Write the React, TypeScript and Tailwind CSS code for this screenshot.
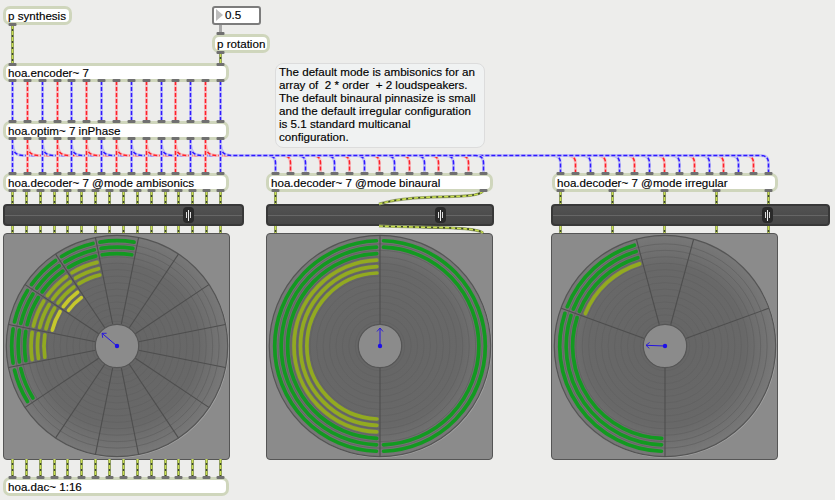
// Max/MSP patcher: hoa.decoder~ help patch

const FONT = "font-['Liberation_Sans',Arial,sans-serif] [-webkit-text-stroke:0.15px_#000]";

const spread = (start: number, end: number, count: number) =>
  Array.from({ length: count }, (_, i) => Math.round(start + ((end - start) * i) / (count - 1)) + 0.5);

const encoderXs = spread(12, 220, 15);
const binauralXs = spread(275, 483, 15);
const irregularXs = spread(560, 768, 15);
const outXs = spread(12, 220, 16);
const irregularOutXs = spread(560, 768, 5);

const GREEN = "#129a20";
const OLIVE = "#92aa20";
const YELLOW = "#c6c82c";

const ringRadius = (i: number) => 105.3 - 6.45 * i;

const polar = (r: number, deg: number) => {
  const a = ((deg - 90) * Math.PI) / 180;
  return [r * Math.cos(a), r * Math.sin(a)];
};

const arc = (r: number, from: number, to: number) => {
  const [x1, y1] = polar(r, from);
  const [x2, y2] = polar(r, to);
  const large = to - from > 180 ? 1 : 0;
  return `M${x1.toFixed(2)} ${y1.toFixed(2)}A${r} ${r} 0 ${large} 1 ${x2.toFixed(2)} ${y2.toFixed(2)}`;
};

interface Sector {
  from: number;
  to: number;
  lit?: string[];
}

const g3 = [GREEN, GREEN, GREEN];
const o3 = [OLIVE, OLIVE, OLIVE];

const ambisonicLit: Record<number, string[]> = {
  0: g3,
  15: [...g3, ...o3],
  14: [...g3, ...o3, YELLOW, YELLOW],
  13: [...g3, ...o3, YELLOW],
  12: [...g3, ...o3],
  11: [GREEN, GREEN],
};

const ambisonicSectors: Sector[] = Array.from({ length: 16 }, (_, k) => ({
  from: k * 22.5 - 11.25,
  to: k * 22.5 + 11.25,
  lit: ambisonicLit[k],
}));

const binauralSectors: Sector[] = [
  { from: 0, to: 180, lit: [GREEN, GREEN] },
  { from: 180, to: 360, lit: [...g3, ...o3] },
];

const irregularSectors: Sector[] = [
  { from: -15, to: 15 },
  { from: 15, to: 70 },
  { from: 70, to: 180 },
  { from: 180, to: 290, lit: g3 },
  { from: 290, to: 345, lit: [...g3, OLIVE] },
];

const Meter = ({
  className,
  sectors,
  arrow,
}: {
  className: string;
  sectors: Sector[];
  arrow: [number, number];
}) => {
  const id = `disc${sectors.length}`;
  const rings = Array.from({ length: 13 }, (_, i) => ringRadius(i) - 3.2);
  const len = Math.hypot(arrow[0], arrow[1]);
  const ux = arrow[0] / len;
  const uy = arrow[1] / len;
  return (
    <div
      className={`absolute top-[233px] h-[227px] w-[227px] rounded-[4px] border border-[#555] bg-[#8b8b8b] ${className}`}
    >
      <svg width="225" height="225" viewBox="-113 -112 225 225" className="block">
        <defs>
          <radialGradient id={id} cx="0" cy="0" r="111" gradientUnits="userSpaceOnUse">
            <stop offset="0" stopColor="#656565" />
            <stop offset="0.72" stopColor="#686868" />
            <stop offset="1" stopColor="#787878" />
          </radialGradient>
        </defs>
        <circle cx="0.8" cy="0.8" r="111" fill="#a6a6a6" />
        <circle r="110.7" fill={`url(#${id})`} stroke="#555555" strokeWidth="1.2" />
        {rings.map((r) => (
          <circle key={r} r={r} fill="none" stroke="#616161" strokeWidth="0.8" />
        ))}
        {sectors.map((s) =>
          (s.lit ?? []).map((color, i) => {
            const r = ringRadius(i);
            const pad = (1.9 / r) * (180 / Math.PI) + 0.9;
            return (
              <path
                key={`${s.from}-${i}`}
                d={arc(r, s.from + pad, s.to - pad)}
                fill="none"
                stroke={color}
                strokeWidth="3.7"
                strokeLinecap="round"
              />
            );
          })
        )}
        {sectors.map((s) => {
          const [x1, y1] = polar(22, s.from);
          const [x2, y2] = polar(110.5, s.from);
          return (
            <line key={s.from} x1={x1} y1={y1} x2={x2} y2={y2} stroke="#4e4e4e" strokeWidth="1.1" />
          );
        })}
        <circle r="21.7" fill="#8b8b8b" stroke="#555555" strokeWidth="1.2" />
        <line x1="0" y1="0" x2={arrow[0]} y2={arrow[1]} stroke="#2412e0" strokeWidth="1" />
        <path
          d={`M${arrow[0] - uy * 3 - ux * 3.5} ${arrow[1] + ux * 3 - uy * 3.5}L${arrow[0]} ${arrow[1]}L${arrow[0] + uy * 3 - ux * 3.5} ${arrow[1] - ux * 3 - uy * 3.5}`}
          fill="none"
          stroke="#2412e0"
          strokeWidth="0.9"
        />
        <circle r="2.2" fill="#1e10e8" />
      </svg>
    </div>
  );
};

const Gain = ({ className, handle }: { className: string; handle: string }) => (
  <div
    className={`absolute top-[204px] flex h-[22px] items-center rounded-[4px] border-2 border-[#383838] bg-gradient-to-b from-[#525252] to-[#474747] ${className}`}
  >
    <div className="h-px flex-1 bg-[#666]" />
    <div
      className={`absolute top-[1px] flex h-[16px] w-[11px] items-center justify-center gap-px rounded-[4px] bg-[#2a2a2a] ${handle}`}
    >
      <span className="h-[6px] w-px bg-[#ddd]" />
      <span className="h-[11px] w-px bg-[#eee]" />
      <span className="h-[6px] w-px bg-[#ddd]" />
    </div>
  </div>
);

const Box = ({ className, text }: { className: string; text: string }) => (
  <div className={`absolute rounded-[7px] bg-[#cfd6bc] p-[3px] ${className}`}>
    <div
      className={`h-full whitespace-nowrap rounded-[4px] bg-white pl-[2px] text-[11.6px] leading-[13px] text-black ${FONT}`}
    >
      {text}
    </div>
  </div>
);

const AudioCord = ({ d }: { d: string }) => (
  <g fill="none">
    <path d={d} stroke="#9fa97e" strokeWidth="3" />
    <path d={d} stroke="#3e4a20" strokeWidth="1.6" />
    <path d={d} stroke="#c8de50" strokeWidth="1.6" strokeDasharray="4 2" />
  </g>
);

const SignalCord = ({ d, red }: { d: string; red: boolean }) => (
  <g fill="none">
    <path d={d} stroke={red ? "#f6c0c4" : "#c4c4f6"} strokeWidth="3" />
    <path d={d} stroke={red ? "#ff2028" : "#3018ff"} strokeWidth="1.5" strokeDasharray="4 2" />
  </g>
);

const Port = ({ x, y, w = 8 }: { x: number; y: number; w?: number }) => (
  <rect x={x - w / 2} y={y} width={w} height={3} rx={1} fill="#707070" />
);

const Cords = () => {
  const drop = (x: number, y1: number, y2: number) => `M${x} ${y1}V${y2}`;
  const bus = (x: number, target: number) =>
    `M${x} 140V143C${x} 153 ${x + 4} 155.5 ${x + 12} 155.5H${target - 8}Q${target} 155.5 ${target} 163V173`;
  return (
    <svg width="835" height="500" className="pointer-events-none absolute left-0 top-0">
      <path d="M220.5 25V34" stroke="#a9a9a9" strokeWidth="3" />
      <AudioCord d={drop(12.5, 25, 63)} />
      <AudioCord d={drop(220.5, 53, 63)} />
      {encoderXs.map((x, i) => (
        <SignalCord key={x} d={drop(x, 81, 121)} red={i % 2 === 1} />
      ))}
      {encoderXs.map((x, i) => (
        <SignalCord key={x} d={bus(x, irregularXs[i])} red={i % 2 === 1} />
      ))}
      {encoderXs.map((x, i) => (
        <SignalCord key={x} d={bus(x, binauralXs[i])} red={i % 2 === 1} />
      ))}
      {encoderXs.map((x, i) => (
        <SignalCord key={x} d={drop(x, 139, 173)} red={i % 2 === 1} />
      ))}
      {outXs.map((x) => (
        <g key={x}>
          <AudioCord d={drop(x, 191, 204)} />
          <AudioCord d={drop(x, 226, 233)} />
          <AudioCord d={drop(x, 459, 478)} />
        </g>
      ))}
      <AudioCord d={drop(275.5, 191, 204)} />
      <AudioCord d={drop(275.5, 226, 233)} />
      <AudioCord d="M483 191C476 201 420 192 379 204" />
      <AudioCord d="M379 226C420 228 476 226 483 233" />
      {irregularOutXs.map((x) => (
        <g key={x}>
          <AudioCord d={drop(x, 191, 204)} />
          <AudioCord d={drop(x, 226, 233)} />
        </g>
      ))}

      <Port x={12.5} y={23} />
      <Port x={220.5} y={32} />
      <Port x={220.5} y={51} />
      <Port x={12.5} y={63} />
      <Port x={220.5} y={63} />
      {encoderXs.map((x) => (
        <g key={x}>
          <Port x={x} y={79} />
          <Port x={x} y={120} />
          <Port x={x} y={137} />
          <Port x={x} y={172} />
        </g>
      ))}
      {outXs.map((x) => (
        <g key={x}>
          <Port x={x} y={189} />
          <Port x={x} y={476} />
        </g>
      ))}
      {binauralXs.map((x) => (
        <Port key={x} x={x} y={172} />
      ))}
      <Port x={275.5} y={189} />
      <Port x={483.5} y={189} />
      {irregularXs.map((x) => (
        <Port key={x} x={x} y={172} />
      ))}
      {irregularOutXs.map((x) => (
        <Port key={x} x={x} y={189} />
      ))}
    </svg>
  );
};

export default function App() {
  return (
    <div className="relative h-[500px] w-[835px] overflow-hidden bg-[#ededeb]">
      <Box className="left-[3px] top-[6px] h-[19px] w-[69px]" text="p synthesis" />
      <Box className="left-[212px] top-[34px] h-[19px] w-[58px]" text="p rotation" />
      <Box className="left-[3px] top-[63px] h-[19px] w-[226px]" text="hoa.encoder~ 7" />
      <Box className="left-[3px] top-[121px] h-[19px] w-[226px]" text="hoa.optim~ 7 inPhase" />
      <Box className="left-[3px] top-[173px] h-[19px] w-[226px]" text="hoa.decoder~ 7 @mode ambisonics" />
      <Box className="left-[266px] top-[173px] h-[19px] w-[227px]" text="hoa.decoder~ 7 @mode binaural" />
      <Box className="left-[552px] top-[173px] h-[19px] w-[226px]" text="hoa.decoder~ 7 @mode irregular" />
      <Box className="left-[3px] top-[477px] h-[19px] w-[226px]" text="hoa.dac~ 1:16" />

      <div
        className={`absolute left-[212px] top-[6px] flex h-[19px] w-[49px] items-center rounded-[3px] border-2 border-[#7c7c7c] bg-white pb-px text-[11.6px] text-black ${FONT}`}
      >
        <span className="ml-[2px] h-0 w-0 border-y-[6px] border-l-[7px] border-y-transparent border-l-[#bdbdbd]" />
        <span className="ml-[2px]">0.5</span>
      </div>

      <div
        className={`absolute left-[275px] top-[63px] h-[85px] w-[210px] rounded-[8px] border border-[#dcdcdc] bg-[#f0f2f2] px-[3px] pt-[1px] text-[11.6px] leading-[13px] text-black ${FONT}`}
      >
        <div className="whitespace-nowrap">The default mode is ambisonics for an</div>
        <div className="whitespace-pre">array of  2 * order  + 2 loudspeakers.</div>
        <div className="whitespace-nowrap">The default binaural pinnasize is small</div>
        <div className="whitespace-nowrap">and the default irregular configuration</div>
        <div className="whitespace-nowrap">is 5.1 standard multicanal</div>
        <div className="whitespace-nowrap">configuration.</div>
      </div>

      <Gain className="left-[3px] w-[241px]" handle="left-[178px]" />
      <Gain className="left-[266px] w-[228px]" handle="left-[167px]" />
      <Gain className="left-[551px] w-[279px]" handle="left-[209px]" />

      <Meter className="left-[3px]" sectors={ambisonicSectors} arrow={[-15, -12.7]} />
      <Meter className="left-[266px]" sectors={binauralSectors} arrow={[0, -18]} />
      <Meter className="left-[551px]" sectors={irregularSectors} arrow={[-19, -0.7]} />

      <Cords />
    </div>
  );
}
